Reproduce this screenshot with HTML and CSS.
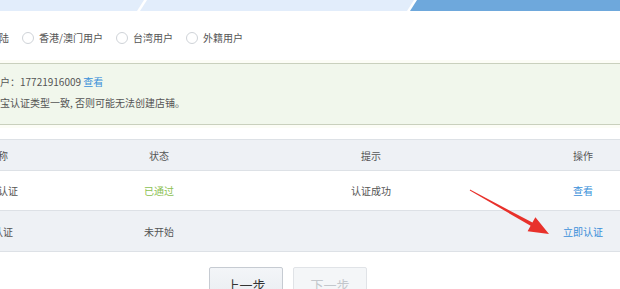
FILE: index.html
```html
<!DOCTYPE html>
<html lang="zh-CN">
<head>
<meta charset="utf-8">
<title>认证</title>
<link rel="stylesheet" href="styles.css">
</head>
<body>
<svg class="steps" width="620" height="11" viewBox="0 0 620 11">
  <polygon points="0,0 144,0 137,11 0,11" fill="#e2edfb"/>
  <polygon points="147,0 414,0 407,11 140,11" fill="#e2edfb"/>
  <polygon points="417,0 620,0 620,11 410,11" fill="#6ea8dc"/>
</svg>
<div class="page">
  <div class="radios">
    <label class="radio"><span class="circle"></span><span>中国大陆</span></label>
    <label class="radio"><span class="circle"></span><span>香港/澳门用户</span></label>
    <label class="radio"><span class="circle"></span><span>台湾用户</span></label>
    <label class="radio"><span class="circle"></span><span>外籍用户</span></label>
  </div>
  <div class="notice">
    <p>当前支付宝账户：17721916009 <a class="link">查看</a></p>
    <p>请保持与支付宝认证类型一致, 否则可能无法创建店铺。</p>
  </div>
  <div class="table">
    <div class="row head">
      <div>认证名称</div><div>状态</div><div>提示</div><div>操作</div>
    </div>
    <div class="row r1">
      <div>淘宝实名认证</div><div class="ok">已通过</div><div>认证成功</div><div><a class="link">查看</a></div>
    </div>
    <div class="row r2">
      <div>支付宝认证</div><div>未开始</div><div></div><div><a class="link">立即认证</a></div>
    </div>
  </div>
  <div class="actions">
    <button class="btn prev">上一步</button>
    <button class="btn next">下一步</button>
  </div>
</div>
<svg class="arrow" width="620" height="289" viewBox="0 0 620 289">
  <polygon points="470,189.6 532.4,222.6 535.4,217.2 549,234 527.6,231.2 530.6,225.8 469.8,190.6" fill="#e8312b"/>
</svg>
</body>
</html>
```
FILE: styles.css
```css
html, body {
  margin: 0;
  padding: 0;
  background: #fff;
  overflow: hidden;
  width: 620px;
  height: 289px;
}
body {
  font-family: "Noto Sans CJK SC", "Microsoft YaHei", sans-serif;
  font-size: 10px;
  color: #555;
}
.steps {
  display: block;
}
.page {
  margin-left: -60px;
  width: 766px;
}
.radios {
  display: flex;
  align-items: center;
  height: 14px;
  margin-top: 20px;
  padding-left: 12px;
}
.radio {
  display: flex;
  align-items: center;
  margin-right: 13px;
  line-height: 14px;
}
.circle {
  width: 10px;
  height: 10px;
  border: 1px solid #cfd3d8;
  border-radius: 50%;
  background: #fff;
  margin-right: 5px;
}
.notice {
  margin-top: 18px;
  border-top: 1px solid #c9d0bd;
  border-bottom: 1px solid #c9d0bd;
  background: #f1f7ec;
  padding: 8px 0 11px 0;
  box-shadow: 0 0 0 3px #fcfdf6;
}
.notice p {
  margin: 0;
  line-height: 20px;
  height: 20px;
}
.notice p + p {
  margin-top: 1px;
}
.link {
  color: #3a8fd9;
}
.table {
  margin-top: 14px;
  border-top: 1px solid #dde1e6;
}
.row {
  display: grid;
  grid-template-columns: 96px 246px 178px 246px;
  align-items: center;
  text-align: center;
  border-bottom: 1px solid #dde1e6;
}
.head {
  height: 30px;
  background: #eef1f5;
}
.r1 {
  height: 39px;
  background: #fff;
}
.r2 {
  height: 40px;
  background: #eef1f5;
}
.ok {
  color: #8cc152;
}
.actions {
  display: flex;
  gap: 10px;
  margin-top: 15px;
  padding-left: 269px;
}
.btn {
  width: 74px;
  height: 34px;
  border-radius: 2px;
  font-family: "Noto Sans CJK SC", "Microsoft YaHei", sans-serif;
  font-size: 13px;
  padding: 0;
}
.prev {
  background: linear-gradient(#f3f5f8, #e9edf1);
  border: 1px solid #c6cbd2;
  color: #333;
}
.next {
  background: #f4f6f8;
  border: 1px solid #e0e3e7;
  color: #c3c7cc;
}
.arrow {
  position: absolute;
  left: 0;
  top: 0;
  pointer-events: none;
}
```
